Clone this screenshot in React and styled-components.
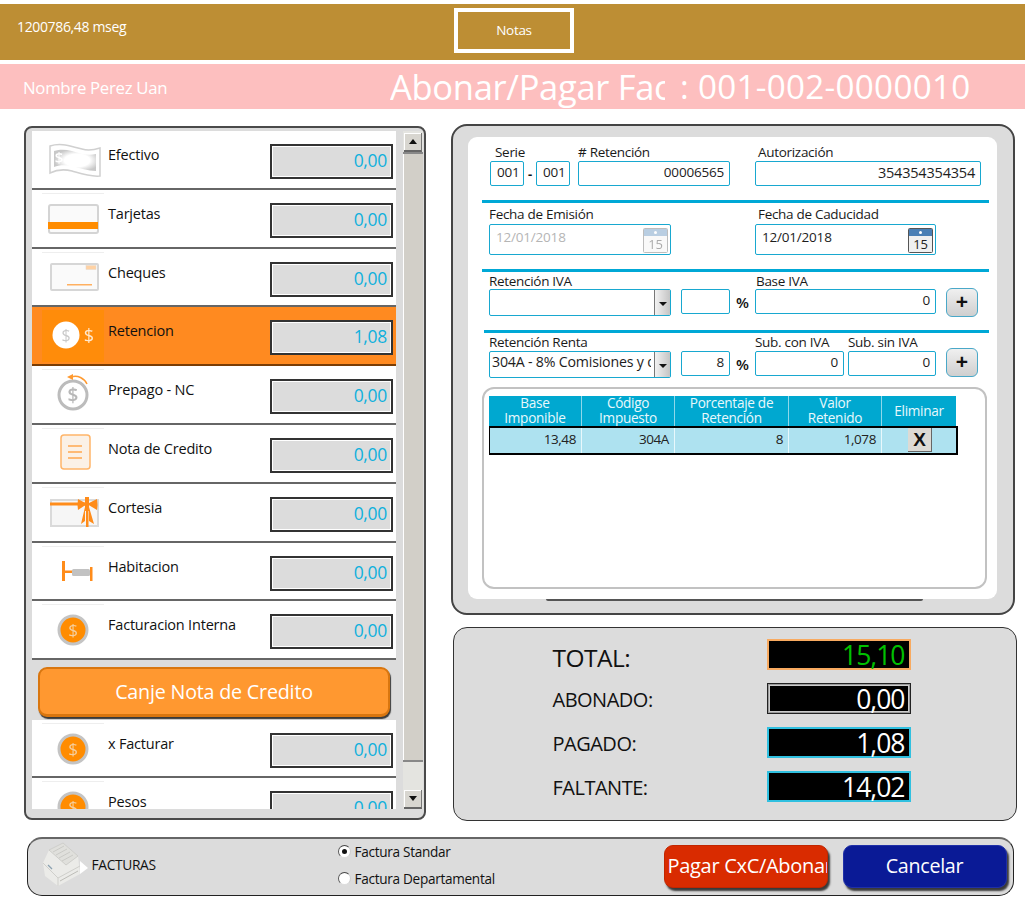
import React from "react";
import styled, { createGlobalStyle } from "styled-components";

const Global = createGlobalStyle`
  html, body { margin: 0; padding: 0; background: #fff; }
  body { font-family: "Open Sans", "Noto Sans", "Liberation Sans", sans-serif; color: #111; }
  * { box-sizing: border-box; }
`;

const Page = styled.div`
  width: 1025px; height: 901px; overflow: hidden; padding-top: 4px;
  display: flex; flex-direction: column;
`;
const TopBar = styled.header`
  height: 56px; background: #bd8e34; display: flex; align-items: flex-start;
  padding: 4px 0 0 17px;
`;
const Timer = styled.div`
  width: 437px; color: #fff; font-size: 14px; letter-spacing: -0.35px; line-height: 18px; margin-top: 10px;
`;
const NotasButton = styled.button`
  width: 120px; height: 45px; background: transparent; border: 4px solid #fff; color: #fff;
  font: 13.5px "Open Sans", sans-serif; letter-spacing: -0.3px; padding: 0 0 2px;
`;
const TitleBar = styled.div`
  height: 45px; margin-top: 4px; background: #fdbfbf; color: #fff; display: flex; align-items: center;
  padding-left: 23px;
`;
const Customer = styled.div`
  width: 367px; font-size: 16.8px; letter-spacing: -0.3px; margin-top: 2px; white-space: nowrap;
`;
const TitleClip = styled.div`
  width: 275px; overflow: hidden; white-space: nowrap; font-size: 34.500px; letter-spacing: -0.3px; line-height: 45px;
`;
const TitleNumber = styled.div`
  margin-left: 15px; white-space: nowrap; font-size: 33.2px; line-height: 45px; letter-spacing: 0.3px;
`;
const Main = styled.main`
  display: flex; align-items: flex-start; padding: 15px 0 0 24px; gap: 25px;
`;
const LeftPanel = styled.section`
  width: 402px; height: 694px; margin-top: 2px; background: #dcdcdc; border: 2px solid #4a4a4a; border-radius: 8px;
  padding: 3px 1px 0 6px; display: flex; gap: 7px;
`;
const ListClip = styled.div`
  width: 364px; height: 678px; overflow: hidden; flex: none;
`;
const Row = styled.div`
  height: 58.8px; display: flex; align-items: flex-start; padding: 13px 3px 0 10px;
  background: ${p => (p.$active ? "#ff8a20" : "#fff")};
  border-bottom: 2px solid ${p => (p.$active ? "#7a3d05" : "#666")};
`;
const IconSlot = styled.div`
  width: 62px; height: 52px; flex: none; margin-top: -10px; padding-top: 5px;
  border-top: 1px solid ${p => (p.$noLine ? "transparent" : p.$active ? "#ff8c0a" : "#eee")};
  background: ${p => (p.$active ? "#ff8c0a" : "transparent")};
  svg { display: block; overflow: visible; filter: blur(0.45px); }
`;
const RowLabel = styled.div`
  flex: 1; margin-left: 4px; font-size: 14.5px; letter-spacing: -0.2px; line-height: 20px; margin-top: 1px; color: #111; white-space: nowrap;
`;
const ValueBox = styled.div`
  width: 123px; height: 35px; flex: none; background: #dcdcdc; border: 2px solid #333;
  box-shadow: inset 0 0 0 1px #fff; color: #10b0dc; font-size: 17.5px; letter-spacing: -0.3px; text-align: right;
  padding-right: 4px; line-height: 29px;
`;
const CanjeWrap = styled.div`
  height: 59.5px; padding: 7px 6px 0 6px; background: #dcdcdc;
`;
const CanjeButton = styled.button`
  width: 352px; height: 50px; border: 2px solid #d9760f; border-bottom-width: 3px; border-radius: 9px; background: #ff9830; color: #fff;
  font: 19.7px "Open Sans", sans-serif; letter-spacing: -0.2px; box-shadow: 1px 2px 1px #3a3a3a; padding: 0;
`;
const Scrollbar = styled.div`
  width: 20px; height: 678px; display: flex; flex-direction: column; background: #e4e4e0; flex: none;
`;
const ScrollButton = styled.div`
  height: 19px; margin: 2px 1px 0 1px; background: #d8d6d0; border-bottom: 2px solid #666; border-right: 1px solid #777;
  box-shadow: inset 1px 1px 0 #fff; display: flex; align-items: center; justify-content: center;
  flex: none;
  &::after {
    content: ""; width: 0; height: 0; border-left: 4px solid transparent; border-right: 4px solid transparent;
    ${p => (p.$down ? "border-top: 5px solid #111;" : "border-bottom: 5px solid #111;")}
  }
`;
const ScrollThumb = styled.div`
  height: 610px; flex: none; background: #d2cfc8; border-bottom: 2px solid #888; border-top: 2px solid #888; box-shadow: inset 1px 0 0 #fff;
`;
const ScrollGap = styled.div` flex: 1; `;

const RightCol = styled.div`
  display: flex; flex-direction: column;
`;
const FormPanel = styled.section`
  width: 564px; height: 491px; background: #dcdcdc; border: 2px solid #444; border-radius: 16px;
  padding: 11px 16px 14px 15px;
`;
const FormSheet = styled.div`
  position: relative; height: 462px; background: #fff; border-radius: 9px; padding: 0 8px 0 14px;
  &::after {
    content: ""; position: absolute; left: 78px; right: 74px; bottom: -2px; height: 2px; background: #555; border-radius: 0 0 6px 6px; filter: blur(0.5px);
  }
`;
const Section = styled.div`
  height: ${p => p.$h}px; padding: ${p => p.$pt}px 0 0 7px; display: flex; align-items: flex-start;
`;
const Divider = styled.div`
  height: 3px; background: #00a8d6; margin-left: ${p => p.$ml || 0}px;
`;
const Group = styled.div`
  width: ${p => p.$w}px; flex: none; margin-left: ${p => p.$ml || 0}px;
`;
const FieldLabel = styled.div`
  height: 16px; line-height: 16px; font-size: 13.5px; font-weight: 500; letter-spacing: -0.3px; white-space: nowrap; color: #1a1a1a;
  margin-left: ${p => p.$ml || 0}px; margin-bottom: ${p => p.$mb || 0}px;
`;
const Field = styled.div`
  width: ${p => p.$w || "100%"}; height: ${p => p.$h || 25}px; flex: none; border: 1.5px solid #18a8d0; border-radius: 2px; background: #fff;
  display: flex; align-items: center; justify-content: ${p => (p.$left ? "flex-start" : "flex-end")};
  padding: 0 ${p => (p.$left ? 6 : 5)}px ${p => p.$pb ?? 3}px ${p => (p.$left ? 6 : 2)}px; font-size: ${p => p.$fs || 13.5}px; letter-spacing: -0.2px; color: ${p => p.$muted ? "#b5b5b5" : "#1d1d1d"};
  position: relative; white-space: nowrap;
`;
const FieldLine = styled.div`
  display: flex; align-items: center;
`;
const Dash = styled.div`
  width: 12px; text-align: center; font-weight: 700; font-size: 13px;
`;
const Calendar = styled.svg`
  position: absolute; right: 2px; top: 3px;
`;
const Combo = styled.div`
  width: 182px; height: 27px; flex: none; border: 1.5px solid #18a8d0; border-radius: 2px; background: #fff; display: flex; overflow: hidden;
`;
const ComboClip = styled.div`
  flex: 1; min-width: 0; margin-right: 3px; overflow: hidden;
`;
const ComboText = styled.div`
  font-size: 14.2px; letter-spacing: -0.2px; padding: 1px 0 0 2px; white-space: nowrap; line-height: 18px; color: #1d1d1d;
`;
const ComboButton = styled.div`
  width: 16px; flex: none; background: linear-gradient(90deg, #f2f2f2, #c4c4c4); border-left: 1px solid #777;
  display: flex; align-items: center; justify-content: center;
  &::after { content: ""; border-left: 4px solid transparent; border-right: 4px solid transparent; border-top: 4px solid #111; margin-top: 3px; }
`;
const Percent = styled.div`
  width: 25px; flex: none; text-align: center; font-size: 15px; font-weight: 600; line-height: 25px; padding-top: 1px;
`;
const PlusButton = styled.button`
  width: 32px; height: 29px; flex: none; margin: ${p => p.$mt}px 0 0 10px; border: 1.5px solid #4aa8c8; border-radius: 6px;
  background: linear-gradient(180deg, #f0f0f0, #cfcfcf); font: 700 21px/1 "Liberation Sans", sans-serif; color: #111; padding: 0 0 2px;
`;
const TableBox = styled.div`
  width: 505px; height: 202px; border: 2.5px solid #c2c2c2; border-radius: 12px; padding: 7px 0 0 5px; background: #fff;
`;
const TableHead = styled.div`
  width: 467px; display: grid; grid-template-columns: 93px 93px 114px 93px 74px; height: 30px; background: #00a8d0;
`;
const HeadCell = styled.div`
  color: #e8f8fc; font-size: 13.6px; letter-spacing: -0.3px; line-height: 15px; text-align: center; display: flex; align-items: center; justify-content: center;
  border-right: 1px solid #8fd8ea; padding-bottom: 2px; height: 30px; overflow: hidden;
  &:last-child { border-right: 0; }
`;
const TableRow = styled.div`
  width: 469px; height: 29px; display: grid; grid-template-columns: 92px 93px 114px 93px 74px; background: #aee2f0;
  border: 2px solid #000; border-width: 2px 2px 2px 1px;
`;
const DataCell = styled.div`
  font-size: 13.5px; letter-spacing: -0.4px; line-height: 23px; text-align: right; padding-right: 5px; border-right: 1px solid #e8f8fc; color: #222;
  &:last-child { border-right: 0; padding-right: 0; }
`;
const DeleteButton = styled.button`
  display: block; width: 24px; height: 24px; margin: 0 0 0 26px; background: #dcdad4; border: 0; border-right: 1px solid #666; border-bottom: 1px solid #666;
  font: 700 19px/24px "Liberation Sans", sans-serif; color: #111; padding: 0;
`;
const TotalPanel = styled.section`
  width: 564px; height: 194px; margin: 12px 0 0 2px; background: #dcdcdc; border: 1.5px solid #333; border-radius: 14px;
  padding: 10.5px 0 0 98.5px; display: flex; flex-direction: column; gap: 13px;
`;
const TotalRow = styled.div`
  display: flex; align-items: center; height: 31px;
`;
const TotalLabel = styled.div`
  width: 214px; flex: none; font-size: ${p => p.$big ? 24.5 : 20}px; letter-spacing: -0.5px; color: #111; padding-top: ${p => p.$big ? 6 : 3}px;
`;
const TotalValue = styled.div`
  width: 144px; height: 31px; background: #000; border: 2px solid ${p => p.$border}; box-shadow: ${p => p.$inset ? "inset 0 0 0 1px #ccc" : "none"};
  outline: ${p => p.$inset ? "1px solid #222" : "none"}; outline-offset: -1px;
  color: ${p => p.$color}; font-size: 26.5px; font-weight: 500; letter-spacing: -1px; text-align: right; line-height: 28px; padding-right: 4px;
`;
const BottomBar = styled.footer`
  width: 987px; height: 59px; margin: 16px 0 0 27px; background: #dcdcdc; border: 1.5px solid #222; border-top: 2px solid #666; border-radius: 15px;
  display: flex; align-items: flex-start;
`;
const PrinterBlock = styled.div`
  width: 309.5px; flex: none; display: flex; align-items: center; padding: 1px 0 0 9.500px; font-size: 13.8px; letter-spacing: -0.35px; color: #111;
  svg { filter: blur(0.5px); flex: none; }
`;
const RadioGroup = styled.div`
  width: 326px; flex: none; display: flex; flex-direction: column; gap: 7px; padding-top: 2px; font-size: 13.6px; letter-spacing: -0.3px;
`;
const RadioRow = styled.label`
  display: flex; align-items: center; gap: 4px; height: 20px;
`;
const RadioDot = styled.span`
  width: 13px; height: 13px; border-radius: 50%; background: #fff; border: 1.5px solid #666; border-color: #444 #ccc #ddd #555;
  display: flex; align-items: center; justify-content: center;
  &::after { content: ""; width: 5px; height: 5px; border-radius: 50%; background: ${p => p.$on ? "#111" : "transparent"}; }
`;
const ActionButton = styled.button`
  width: 164px; height: 43px; flex: none; margin: 5.5px ${p => p.$mr || 0}px 0 0; background: ${p => p.$bg}; border: 1.5px solid ${p => p.$edge}; border-radius: 9px;
  color: #fff; font: ${p => p.$fs || 19.7}px "Open Sans", sans-serif; letter-spacing: -0.3px; box-shadow: 2px 3px 2px #3a3a3a; white-space: nowrap; overflow: hidden;
  padding: 0 0 1px ${p => p.$pl || 0}px; text-align: ${p => p.$pl ? "left" : "center"};
`;

const S = ({ x, y, c = "#bbb", s = 15, w = 400 }) => (
  <text x={x} y={y} fill={c} fontSize={s} fontWeight={w} textAnchor="middle" fontFamily="Open Sans, sans-serif">$</text>
);

const CoinIcon = () => (
  <svg width="62" height="46">
    <circle cx="31" cy="20" r="14" fill="#ff8c00" stroke="#c4c4c4" strokeWidth="3" />
    <S x={31} y={26} c="#f5d0a0" s={17} />
  </svg>
);
const icons = {
  cash: (
    <svg width="62" height="46">
      <defs>
        <radialGradient id="noteFill" cx="55%" cy="50%" r="55%">
          <stop offset="55%" stopColor="#ffffff" />
          <stop offset="100%" stopColor="#c8c8c8" />
        </radialGradient>
      </defs>
      <path d="M8 6 C20 2 30 7 40 9 C46 11 52 10 58 8 V36 C48 37 40 34 30 31 C22 29 14 30 8 33 Z" fill="#fff" stroke="#d0d0d0" strokeWidth="1.500" />
      <path d="M12 11 C22 8 30 11 40 14 C45 15 50 15 54 14 V31 C46 31 38 28 30 26 C23 25 17 25 12 27 Z" fill="url(#noteFill)" />
      <S x={17} y={23} c="#fff" s={15} w={600} />
    </svg>
  ),
  card: (
    <svg width="62" height="46">
      <rect x="7" y="6" width="49" height="28" rx="2" fill="#fafafa" stroke="#d4d4d4" strokeWidth="2" />
      <rect x="6" y="23" width="50" height="7" fill="#ff8c00" />
    </svg>
  ),
  cheque: (
    <svg width="62" height="46">
      <rect x="9" y="6" width="47" height="26" rx="1" fill="#fafafa" stroke="#d6d6d6" strokeWidth="2" />
      <rect x="44" y="7.500" width="10" height="4" fill="#ffd2a4" stroke="#e4d8cc" strokeWidth="0.5" />
      <rect x="25" y="26" width="25" height="1.500" fill="#ffb060" />
    </svg>
  ),
  ret: (
    <svg width="62" height="46">
      <circle cx="24" cy="19" r="13.500" fill="#fff" />
      <S x={24} y={25} c="#c9c9c9" s={16} />
      <S x={47} y={26} c="#ffe9d0" s={18} w={400} />
    </svg>
  ),
  prepago: (
    <svg width="62" height="46">
      <circle cx="31" cy="20" r="14" fill="#fff" stroke="#bcbcbc" strokeWidth="3" />
      <S x={31} y={27} c="#b8b8b8" s={19} w={600} />
      <path d="M29 2 C36 0 42 3 45 9" fill="none" stroke="#ff9a30" strokeWidth="1.500" />
      <path d="M31 -1 L25 2 L31 5 Z" fill="#ff9a30" />
    </svg>
  ),
  nota: (
    <svg width="62" height="46">
      <rect x="19" y="1" width="29" height="34" rx="3" fill="#fbf1e6" stroke="#ffb569" strokeWidth="1.500" />
      <path d="M26 12 H40 M26 18 H40 M26 24 H40" stroke="#ffa850" strokeWidth="1.500" />
    </svg>
  ),
  gift: (
    <svg width="62" height="46">
      <rect x="9" y="7" width="47" height="26" fill="#f6f6f6" stroke="#dadada" strokeWidth="2" />
      <rect x="8" y="9.500" width="36" height="3" fill="#ff8c1a" />
      <path d="M45 11 L36 6 Q35 12 36 17 Z M45 11 L55 6 Q56 12 55 17 Z" fill="#ff8c1a" />
      <rect x="43" y="4" width="4" height="14" fill="#ff8c1a" />
      <path d="M43 14 L39 31 L43 28 Z M47 14 L52 31 L47 28 Z" fill="#ff8c1a" />
      <rect x="44" y="14" width="2.500" height="20" fill="#ff8c1a" />
    </svg>
  ),
  bed: (
    <svg width="62" height="46">
      <rect x="20" y="9" width="3" height="20" fill="#ff8c1a" />
      <rect x="23" y="18.500" width="8" height="2.500" fill="#ff8c1a" />
      <rect x="30" y="17" width="18" height="7" rx="1.500" fill="#c2c2c2" />
      <rect x="48" y="15" width="2.500" height="14" fill="#ff8c1a" />
    </svg>
  ),
  coin: <CoinIcon />,
};

const rows = [
  ["cash", "Efectivo", "0,00"],
  ["card", "Tarjetas", "0,00"],
  ["cheque", "Cheques", "0,00"],
  ["ret", "Retencion", "1,08", true],
  ["prepago", "Prepago - NC", "0,00"],
  ["nota", "Nota de Credito", "0,00"],
  ["gift", "Cortesia", "0,00"],
  ["bed", "Habitacion", "0,00"],
  ["coin", "Facturacion Interna", "0,00"],
];

const PayRow = ({ icon, label, value, active, first }) => (
  <Row $active={active}>
    <IconSlot $active={active} $noLine={first}>{icons[icon]}</IconSlot>
    <RowLabel>{label}</RowLabel>
    <ValueBox>{value}</ValueBox>
  </Row>
);

const CalendarIcon = ({ off }) => (
  <Calendar width="25" height="25" viewBox="0 0 25 25" style={off ? { opacity: 0.38 } : undefined}>
    <rect x="0.500" y="0.500" width="24" height="24" rx="1" fill="#f0f0f0" stroke="#555" />
    <rect x="1" y="1" width="23" height="7" fill="#4a7fb5" />
    <circle cx="12.500" cy="4.500" r="1.500" fill="#fff" />
    <text x="12.500" y="21" textAnchor="middle" fontSize="13" fill="#222" fontFamily="Open Sans, sans-serif">15</text>
  </Calendar>
);

const Printer = () => (
  <svg width="54" height="48" viewBox="0 0 54 48">
    <path d="M42 21 L50 28 L42 34 Z" fill="#fff" />
    <path d="M5 23 L11 10 L25 3 L40 16 L42 34 L20 46 L7 36 Z" fill="#ebebe8" />
    <path d="M11 10 L25 3 L40 16 L28 25 Z" fill="#e0e0dc" stroke="#c8c8c4" strokeWidth="0.8" />
    <path d="M15 12 L26 6 M18 15 L29 9 M21 18 L32 12 M24 21 L35 15" stroke="#c4c4c0" strokeWidth="0.8" />
    <path d="M5 23 L20 38 L42 26 M20 38 V46" fill="none" stroke="#cfcfcb" />
    <path d="M22 41 L40 31" stroke="#bdbdb8" />
    <path d="M10 25 L14 29" stroke="#8aa0b0" strokeWidth="1.200" />
  </svg>
);

const totals = [
  ["TOTAL:", "15,10", "#f8aa60", "#00c000", true],
  ["ABONADO:", "0,00", "#9a9a9a", "#fff", false, true],
  ["PAGADO:", "1,08", "#30c0e0", "#fff"],
  ["FALTANTE:", "14,02", "#30c0e0", "#fff"],
];

export default function App() {
  return (
    <Page>
      <Global />
      <TopBar>
        <Timer>1200786,48 mseg</Timer>
        <NotasButton>Notas</NotasButton>
      </TopBar>
      <TitleBar>
        <Customer>Nombre Perez Uan</Customer>
        <TitleClip>Abonar/Pagar Factura</TitleClip>
        <TitleNumber>: 001-002-0000010</TitleNumber>
      </TitleBar>
      <Main>
        <LeftPanel>
          <ListClip>
            {rows.map(([icon, label, value, active], i) => (
              <PayRow key={label} icon={icon} label={label} value={value} active={active} first={i === 0} />
            ))}
            <CanjeWrap><CanjeButton>Canje Nota de Credito</CanjeButton></CanjeWrap>
            <PayRow icon="coin" label="x Facturar" value="0,00" />
            <PayRow icon="coin" label="Pesos" value="0,00" />
          </ListClip>
          <Scrollbar>
            <ScrollButton />
            <ScrollThumb />
            <ScrollGap />
            <ScrollButton $down />
          </Scrollbar>
        </LeftPanel>
        <RightCol>
          <FormPanel>
            <FormSheet>
              <Section $h={63} $pt={7}>
                <Group $w={80} $ml={1}>
                  <FieldLabel $ml={5} $mb={1}>Serie</FieldLabel>
                  <FieldLine>
                    <Field $w="34px" $left>001</Field>
                    <Dash>-</Dash>
                    <Field $w="34px" $left>001</Field>
                  </FieldLine>
                </Group>
                <Group $w={152} $ml={8}>
                  <FieldLabel $mb={1}>#&nbsp;Retención</FieldLabel>
                  <Field>00006565</Field>
                </Group>
                <Group $w={226} $ml={25}>
                  <FieldLabel $ml={3} $mb={1}>Autorización</FieldLabel>
                  <Field $fs={14.5}>354354354354</Field>
                </Group>
              </Section>
              <Divider />
              <Section $h={66} $pt={3}>
                <Group $w={182}>
                  <FieldLabel $mb={2}>Fecha de Emisión</FieldLabel>
                  <Field $h={31} $left $muted $pb={6}>12/01/2018<CalendarIcon off /></Field>
                </Group>
                <Group $w={181} $ml={84}>
                  <FieldLabel $ml={3} $mb={2}>Fecha de Caducidad</FieldLabel>
                  <Field $h={31} $left $pb={6}>12/01/2018<CalendarIcon /></Field>
                </Group>
              </Section>
              <Divider />
              <Section $h={58} $pt={1}>
                <Group $w={192}>
                  <FieldLabel>Retención IVA</FieldLabel>
                  <Combo><ComboClip /><ComboButton /></Combo>
                </Group>
                <Group $w={49}>
                  <FieldLabel />
                  <Field />
                </Group>
                <Group $w={25}>
                  <FieldLabel />
                  <Percent>%</Percent>
                </Group>
                <Group $w={181}>
                  <FieldLabel $ml={1}>Base IVA</FieldLabel>
                  <Field>0</Field>
                </Group>
                <PlusButton $mt={15}>+</PlusButton>
              </Section>
              <Divider $ml={2} />
              <Section $h={54} $pt={1}>
                <Group $w={192}>
                  <FieldLabel $mb={1}>Retención Renta</FieldLabel>
                  <Combo>
                    <ComboClip><ComboText>304A - 8% Comisiones y d</ComboText></ComboClip>
                    <ComboButton />
                  </Combo>
                </Group>
                <Group $w={49}>
                  <FieldLabel $mb={1} />
                  <Field>8</Field>
                </Group>
                <Group $w={25}>
                  <FieldLabel $mb={1} />
                  <Percent>%</Percent>
                </Group>
                <Group $w={89}>
                  <FieldLabel $mb={1}>Sub. con IVA</FieldLabel>
                  <Field>0</Field>
                </Group>
                <Group $w={88} $ml={4}>
                  <FieldLabel $mb={1}>Sub. sin IVA</FieldLabel>
                  <Field>0</Field>
                </Group>
                <PlusButton $mt={14}>+</PlusButton>
              </Section>
              <TableBox>
                <TableHead>
                  <HeadCell>Base<br />Imponible</HeadCell>
                  <HeadCell>Código<br />Impuesto</HeadCell>
                  <HeadCell>Porcentaje de<br />Retención</HeadCell>
                  <HeadCell>Valor<br />Retenido</HeadCell>
                  <HeadCell>Eliminar</HeadCell>
                </TableHead>
                <TableRow>
                  <DataCell>13,48</DataCell>
                  <DataCell>304A</DataCell>
                  <DataCell>8</DataCell>
                  <DataCell>1,078</DataCell>
                  <DataCell><DeleteButton>X</DeleteButton></DataCell>
                </TableRow>
              </TableBox>
            </FormSheet>
          </FormPanel>
          <TotalPanel>
            {totals.map(([label, value, border, color, big, inset]) => (
              <TotalRow key={label}>
                <TotalLabel $big={big}>{label}</TotalLabel>
                <TotalValue $border={border} $color={color} $inset={inset}>{value}</TotalValue>
              </TotalRow>
            ))}
          </TotalPanel>
        </RightCol>
      </Main>
      <BottomBar>
        <PrinterBlock><Printer />FACTURAS</PrinterBlock>
        <RadioGroup>
          <RadioRow><RadioDot $on />Factura Standar</RadioRow>
          <RadioRow><RadioDot />Factura Departamental</RadioRow>
        </RadioGroup>
        <ActionButton $bg="#d92b00" $edge="#c22600" $pl={3} $mr={15} $fs={20}>Pagar CxC/Abonar</ActionButton>
        <ActionButton $bg="#0a1a96" $edge="#2030a8">Cancelar</ActionButton>
      </BottomBar>
    </Page>
  );
}
